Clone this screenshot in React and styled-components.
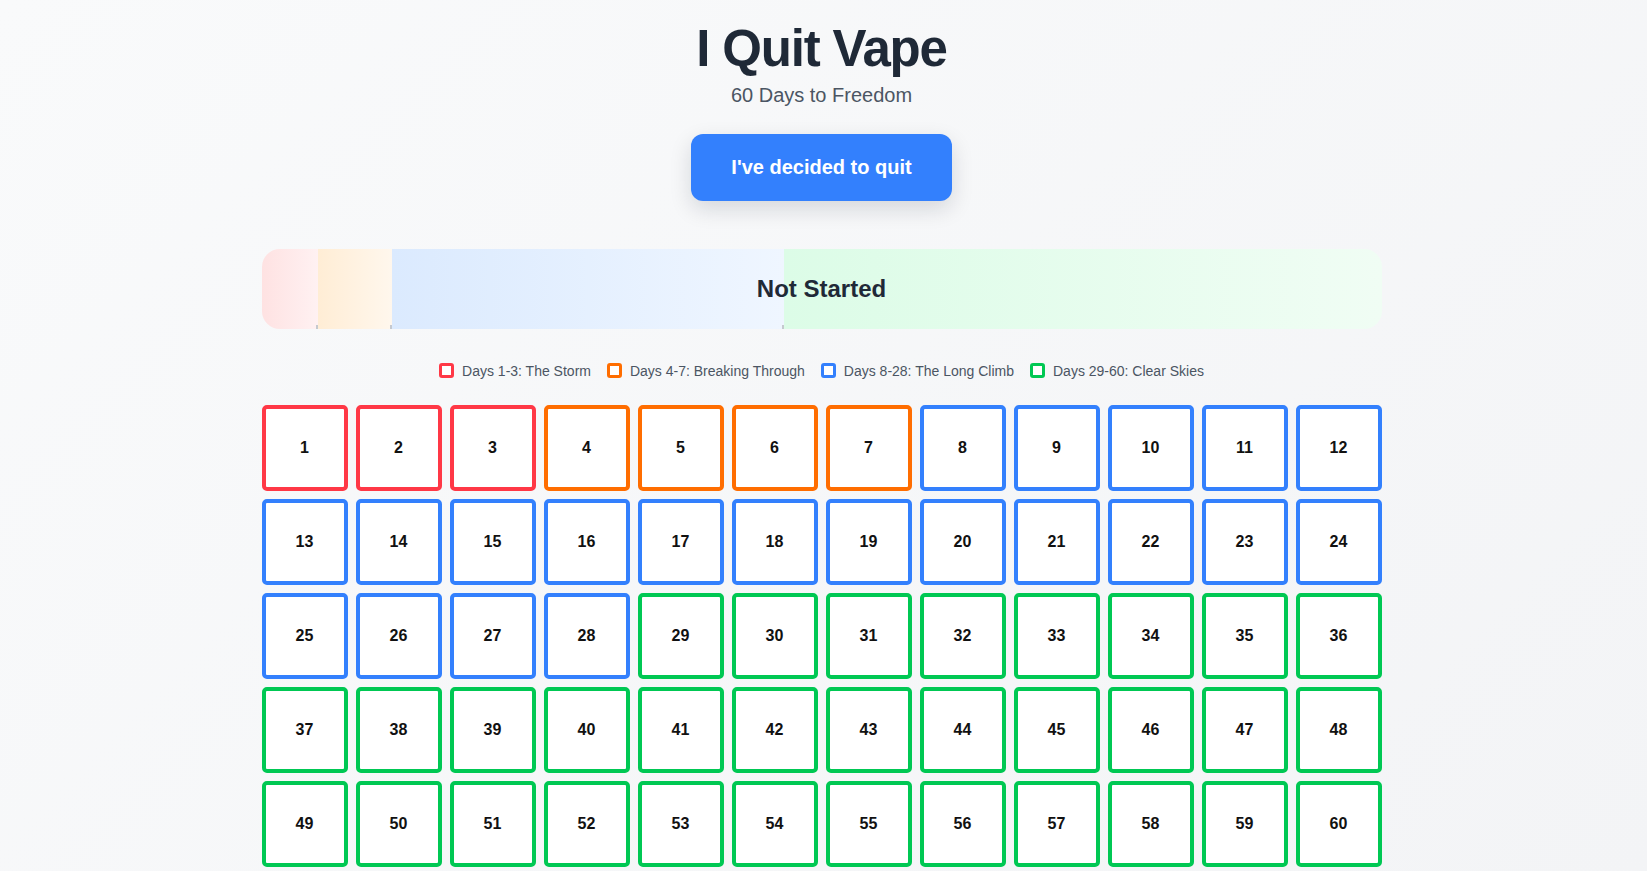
import React from "react";
import styled, { createGlobalStyle } from "styled-components";

const GlobalStyle = createGlobalStyle`
  html {
    background: linear-gradient(135deg, #f9fafb 0%, #f3f4f6 100%);
    min-height: 100%;
  }
  body {
    margin: 0;
    min-height: 100vh;
    font-family: "Liberation Sans", Arial, Helvetica, sans-serif;
    color: #1f2937;
  }
  * { box-sizing: border-box; }
`;

const PHASES = [
  { key: "storm", label: "Days 1-3: The Storm", from: 1, to: 3, color: "#ff3846", tint: "#fee2e2", light: "#fff1f2" },
  { key: "breaking", label: "Days 4-7: Breaking Through", from: 4, to: 7, color: "#ff6d00", tint: "#ffedd5", light: "#fff7ed" },
  { key: "climb", label: "Days 8-28: The Long Climb", from: 8, to: 28, color: "#3380fd", tint: "#dbeafe", light: "#eff6ff" },
  { key: "clear", label: "Days 29-60: Clear Skies", from: 29, to: 60, color: "#00c853", tint: "#dcfce7", light: "#f0fdf4" },
];

const phaseFor = (day) => PHASES.find((p) => day >= p.from && day <= p.to);

const Page = styled.main`
  max-width: 1124px;
  margin: 0 auto;
  padding: 20px 4px 0 0;
  display: flex;
  flex-direction: column;
  align-items: stretch;
`;

const Header = styled.header`
  display: flex;
  flex-direction: column;
  align-items: center;
`;

const Title = styled.h1`
  margin: 0 0 5px;
  font-size: 51px;
  line-height: 1.15;
  font-weight: 700;
  letter-spacing: -1.2px;
  color: #1f2937;
`;

const Subtitle = styled.p`
  margin: 0;
  font-size: 20px;
  line-height: 23px;
  color: #4b5563;
`;

const QuitButton = styled.button`
  margin-top: 27px;
  padding: 22px 40px;
  border: none;
  border-radius: 12px;
  background: #3380fd;
  color: #ffffff;
  font-family: inherit;
  font-size: 20px;
  line-height: 23px;
  font-weight: 700;
  cursor: pointer;
  box-shadow: 0 8px 22px rgba(15, 23, 42, 0.14);
`;

const ProgressBar = styled.div`
  position: relative;
  margin-top: 48px;
  height: 80px;
  display: flex;
  border-radius: 18px;
  overflow: hidden;
`;

const Segment = styled.div`
  position: relative;
  flex: ${(p) => p.$days} 1 0;
  background: linear-gradient(to right, ${(p) => p.$tint}, ${(p) => p.$light});

  &::after {
    content: "";
    display: ${(p) => (p.$last ? "none" : "block")};
    position: absolute;
    right: 0;
    bottom: 0;
    width: 2px;
    height: 4px;
    background: #c5c9cf;
  }
`;

const BarLabel = styled.span`
  position: absolute;
  inset: 0;
  display: flex;
  align-items: center;
  justify-content: center;
  font-size: 24px;
  font-weight: 700;
  color: #1f2937;
`;

const Legend = styled.ul`
  margin: 34px 0 0;
  padding: 0;
  list-style: none;
  display: flex;
  justify-content: center;
  align-items: center;
  gap: 16px;
`;

const LegendItem = styled.li`
  display: flex;
  align-items: center;
  gap: 8px;
  font-size: 14px;
  line-height: 16px;
  color: #4b5563;
`;

const Swatch = styled.span`
  width: 15px;
  height: 15px;
  border: 3px solid ${(p) => p.$color};
  border-radius: 3px;
  background: #ffffff;
`;

const DayGrid = styled.div`
  margin-top: 26px;
  display: grid;
  grid-template-columns: repeat(12, 1fr);
  gap: 8px;
`;

const DayCell = styled.div`
  aspect-ratio: 1;
  display: flex;
  align-items: center;
  justify-content: center;
  background: #ffffff;
  border: 4px solid ${(p) => p.$color};
  border-radius: 5px;
  font-size: 16px;
  font-weight: 700;
  color: #111111;
`;

export default function App() {
  const days = Array.from({ length: 60 }, (_, i) => i + 1);
  return (
    <>
      <GlobalStyle />
      <Page>
        <Header>
          <Title>I Quit Vape</Title>
          <Subtitle>60 Days to Freedom</Subtitle>
          <QuitButton type="button">I've decided to quit</QuitButton>
        </Header>

        <ProgressBar>
          {PHASES.map((p, i) => (
            <Segment
              key={p.key}
              $days={p.to - p.from + 1}
              $tint={p.tint}
              $light={p.light}
              $last={i === PHASES.length - 1}
            />
          ))}
          <BarLabel>Not Started</BarLabel>
        </ProgressBar>

        <Legend>
          {PHASES.map((p) => (
            <LegendItem key={p.key}>
              <Swatch $color={p.color} />
              {p.label}
            </LegendItem>
          ))}
        </Legend>

        <DayGrid>
          {days.map((d) => (
            <DayCell key={d} $color={phaseFor(d).color}>
              {d}
            </DayCell>
          ))}
        </DayGrid>
      </Page>
    </>
  );
}
